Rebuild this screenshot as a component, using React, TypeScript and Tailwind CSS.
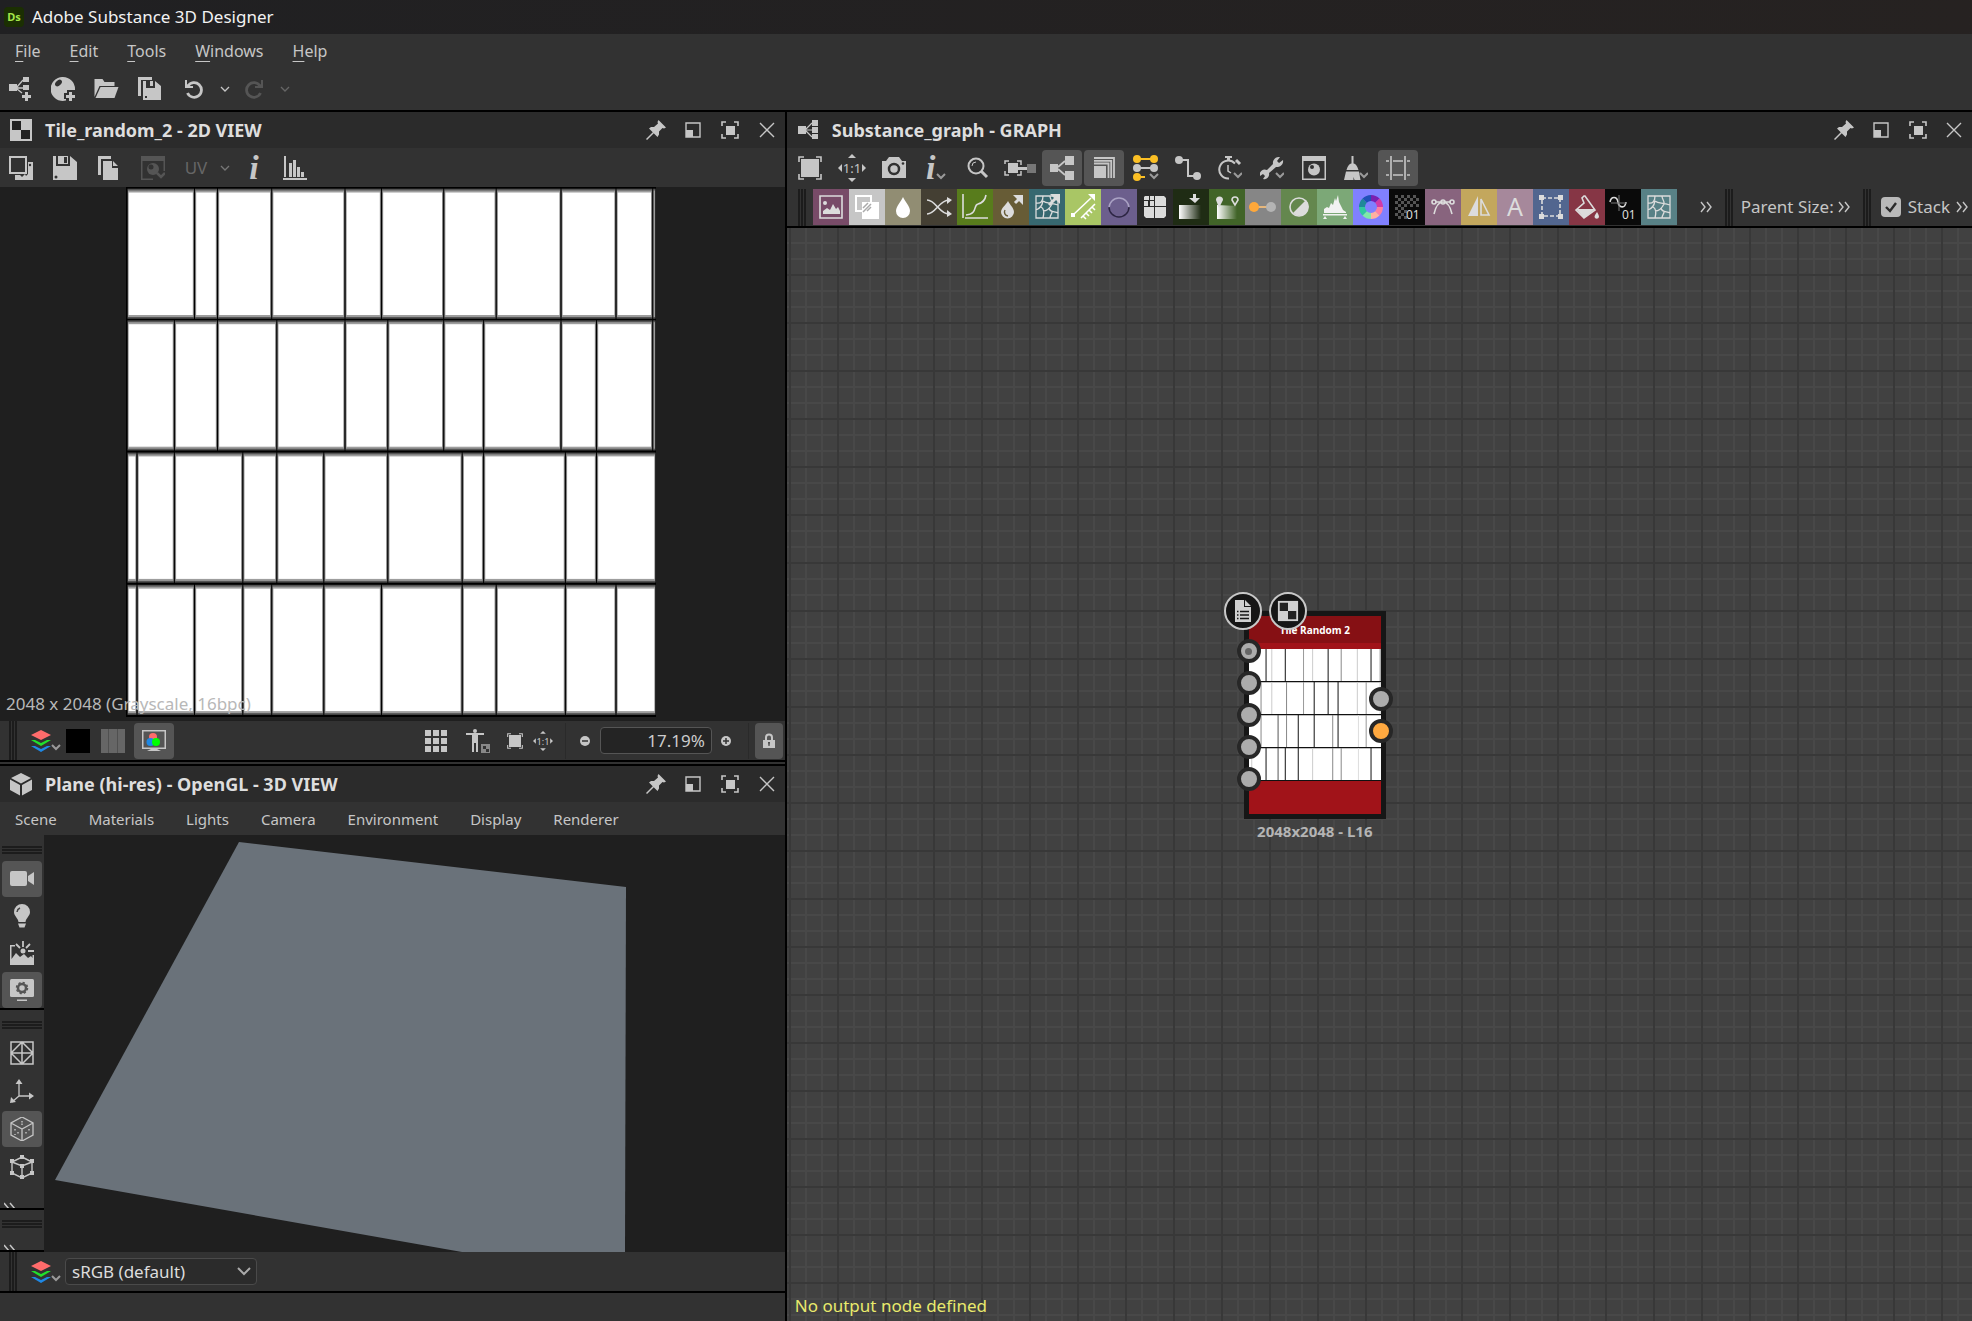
import type { ReactNode } from 'react'
import { clsx } from 'clsx'

type IconProps = {
  children: ReactNode
  box?: number
  className?: string
}

function Icon({ children, box = 24, className = 'size-6' }: IconProps) {
  return (
    <svg
      viewBox={`0 0 ${box} ${box}`}
      className={clsx('shrink-0', className)}
      fill="currentColor"
      aria-hidden="true"
    >
      {children}
    </svg>
  )
}

// ---------- shared icons ----------

const Chevron = ({ className = 'size-[10px]' }: { className?: string }) => (
  <Icon box={10} className={className}>
    <path d="M1 3l4 4 4-4" fill="none" stroke="currentColor" strokeWidth="1.3" />
  </Icon>
)

// small chevron drawn in the corner of an icon that opens a menu
const cornerChevron = (
  <path d="M16 17l4 4 4-4" fill="none" stroke="#9a9a9a" strokeWidth="2" />
)

const DoubleChevron = () => (
  <Icon box={12} className="size-3">
    <path d="M1 1l4 5-4 5M7 1l4 5-4 5" fill="none" stroke="currentColor" strokeWidth="1.4" />
  </Icon>
)

const GraphIcon = () => (
  <Icon>
    <path d="M2 8h8v8H2zM16 2h6v6h-6zM16 9h6v6h-6zM16 16h6v5h-6z" />
    <path d="M10 11l6-6M10 12h6M10 13l6 6" fill="none" stroke="currentColor" strokeWidth="1.2" />
  </Icon>
)

const CheckerIcon = ({ className }: { className?: string }) => (
  <Icon className={className}>
    <path d="M1 1h22v22H1z" />
    <path d="M3 3h9v9H3zM12 12h9v9h-9z" fill="#222" />
  </Icon>
)

const FrameIcon = ({ className }: { className?: string }) => (
  <Icon className={className}>
    <path d="M3 3h18v18H3z" />
    <path
      d="M1 6V1h5M18 1h5v5M23 18v5h-5M6 23H1v-5"
      fill="none"
      stroke="currentColor"
      strokeWidth="1.6"
    />
  </Icon>
)

const OneToOneIcon = ({ className }: { className?: string }) => (
  <Icon box={28} className={className}>
    <path d="M14 0l4 4h-8zM14 28l4-4h-8zM0 14l4-4v8zM28 14l-4-4v8z" />
    <text x="14" y="19" textAnchor="middle" fontSize="13" fontFamily="Noto Sans">
      1:1
    </text>
  </Icon>
)

const LayersIcon = () => (
  <Icon box={30} className="size-[30px]">
    <path d="M10 4l10 5-10 5L0 9z" fill="#ff6b6b" />
    <path d="M0 14h4l6 3 6-3h4l-10 6z" fill="#22e02c" />
    <path d="M0 20h4l6 3 6-3h4l-10 6z" fill="#1e88e5" />
    <path d="M21 19l4 4 4-4" fill="none" stroke="#9a9a9a" strokeWidth="2" />
  </Icon>
)

// ---------- panel chrome ----------

function PanelHeader({ icon, title }: { icon: ReactNode; title: string }) {
  return (
    <header className="flex h-9 shrink-0 items-center bg-[#2b2b2b] pl-[9px]">
      {icon}
      <h2 className="ml-3 flex-1 text-lg font-bold text-[#dedede]">{title}</h2>
      <button aria-label="Pin" className="flex h-9 w-[37px] items-center justify-center">
        <Icon box={20} className="size-5">
          <path d="M12.500 0L20 7.500l-2 1-1.500-.5-3.500 3.500v3L11.500 17 3 8.500l2-1.500h3L12 3.500 11.500 2z" />
          <path d="M8 12l-7.500 7.500" stroke="currentColor" strokeWidth="1.500" />
        </Icon>
      </button>
      <button aria-label="Float" className="flex h-9 w-[37px] items-center justify-center">
        <Icon box={16} className="size-4">
          <path d="M1 1h14v14H1z" fill="none" stroke="currentColor" strokeWidth="1.400" />
          <path d="M1 8h7v7H1z" />
        </Icon>
      </button>
      <button aria-label="Maximize" className="flex h-9 w-[37px] items-center justify-center">
        <Icon box={18} className="size-[18px]">
          <path d="M5 5h9v9H5z" />
          <path
            d="M1 5V1h4M13 1h4v4M17 13v4h-4M5 17H1v-4"
            fill="none"
            stroke="currentColor"
            strokeWidth="1.600"
          />
        </Icon>
      </button>
      <button aria-label="Close" className="flex size-9 items-center justify-center">
        <Icon box={16} className="size-4">
          <path d="M1 1l14 14M15 1L1 15" stroke="currentColor" strokeWidth="1.400" />
        </Icon>
      </button>
    </header>
  )
}

function Grip({ className }: { className?: string }) {
  return (
    <div
      className={clsx(
        'w-2 shrink-0 self-stretch border-x-2 border-[#1c1c1c] px-px',
        className
      )}
    >
      <div className="h-full bg-[#1c1c1c]" />
    </div>
  )
}

function GripRow() {
  return (
    <div className="mx-[2px] h-2 shrink-0 border-y-2 border-[#1c1c1c] py-px">
      <div className="h-full bg-[#1c1c1c]" />
    </div>
  )
}

type ToolProps = {
  label: string
  active?: boolean
  className?: string
  children: ReactNode
}

function Tool({ label, active, className, children }: ToolProps) {
  return (
    <button
      aria-label={label}
      aria-pressed={active}
      className={clsx(
        'flex h-9 shrink-0 items-center justify-center rounded-[4px]',
        active && 'bg-[#555]',
        className
      )}
    >
      {children}
    </button>
  )
}

// ---------- tile pattern ----------

const tileRows = [
  [68.5, 91.5, 145.7, 219, 255.5, 317.7, 370.2, 435, 490, 526.7],
  [48.4, 91.5, 150.8, 219, 261.8, 317.7, 357.6, 435, 470.5, 526.7],
  [11, 48.4, 116.8, 150.8, 197.8, 261.8, 336.2, 357.6, 439.4, 470.5],
  [11, 68.5, 116.8, 145.7, 197.8, 255.5, 336.2, 370.2, 439.4, 490],
]

const thumbShades = [
  '#111 #ccc #111 #999 #ccc #111 #888 #ccc #111 #888',
  '#888 #ccc #888 #999 #111 #111 #111 #ccc #999 #ccc',
  '#fff #888 #555 #888 #111 #111 #888 #111 #ddd #999',
  '#ccc #111 #555 #111 #111 #ccc #888 #888 #ddd #111',
].map((s) => s.split(' '))

function TilePattern() {
  return (
    <svg viewBox="0 0 530 530" className="h-[530px] w-[530px]" role="img" aria-label="Tile_random_2">
      <path d="M0 0h530v530H0z" />
      {tileRows.map((cuts, row) => {
        const edges = [1, ...cuts, 530]
        const y = row * 132.2 + (row === 0 ? 0.5 : 0)
        return edges.slice(1).map((right, i) => {
          const left = edges[i]
          const w = right - left
          return (
            <g key={`${row}-${i}`}>
              <rect x={left + 0.5} y={y + 1.2} width={w - 1} height="130" fill="#555" />
              <rect x={left + 1} y={y + 3} width={Math.max(w - 2, 0)} height="126.5" fill="#9d9d9d" />
              <rect x={left + 1.7} y={y + 5} width={Math.max(w - 3.4, 0)} height="122.5" fill="#fff" />
            </g>
          )
        })
      })}
    </svg>
  )
}

function TileThumb() {
  return (
    <svg viewBox="0 0 530 530" className="block w-full" aria-hidden="true">
      <path d="M0 0h530v530H0z" fill="#fff" />
      {tileRows.map((cuts, row) => (
        <g key={row}>
          {cuts.map((x, i) => (
            <path
              key={x}
              d={`M${x} ${row * 132.5}v132.5`}
              stroke={thumbShades[row][i]}
              strokeWidth="4"
            />
          ))}
          <path d={`M0 ${row * 132.5 + 131}h530`} stroke="#111" strokeWidth="5" />
        </g>
      ))}
    </svg>
  )
}

// ---------- top bars ----------

const menus = ['File', 'Edit', 'Tools', 'Windows', 'Help']

function TopBars() {
  return (
    <>
      <div className="flex h-[34px] items-center gap-2 bg-linear-to-r from-[#202022] to-[#262221] pl-1 text-[#f2f2f2]">
        <span className="flex size-5 items-center justify-center rounded-[4px] bg-[#1b2f02] text-[11px] font-bold text-[#a4e64a]">
          Ds
        </span>
        <h1>Adobe Substance 3D Designer</h1>
      </div>
      <nav className="flex h-[34px] items-center gap-[29px] pl-[15px] text-base">
        {menus.map((m) => (
          <button key={m}>
            <span className="underline underline-offset-4">{m[0]}</span>
            {m.slice(1)}
          </button>
        ))}
      </nav>
      <div className="flex h-[44px] items-center border-b-2 border-black">
        <Tool label="New graph" className="w-[42px]">
          <Icon>
            <path d="M0 7h8v7H0zM14 0h6v5h-6zM14 8h6v5h-6zM16 15h3v3h3v3h-3v3h-3v-3h-3v-3h3z" />
            <path d="M8 10l6-7M8 11h6M8 12l5 4" fill="none" stroke="currentColor" strokeWidth="1.300" />
          </Icon>
        </Tool>
        <Tool label="New package" className="w-[42px]">
          <Icon>
            <path d="M12 0a12 12 0 0112 12v1h-8v3h-3v6h2v1.500A12 12 0 1112 0z" />
            <ellipse cx="7.500" cy="6" rx="4" ry="2.600" fill="#323232" transform="rotate(-45 7.500 6)" />
            <path d="M18 15h3v3h3v3h-3v3h-3v-3h-3v-3h3z" />
          </Icon>
        </Tool>
        <Tool label="Open" className="w-[45px]">
          <Icon className="h-6 w-[25px]">
            <path d="M0 20V2h8l2 3h10v4H5z" />
            <path d="M6 10h18l-4 11H1z" />
          </Icon>
        </Tool>
        <Tool label="Save all" className="w-[42px]">
          <Icon>
            <path d="M0 0h14v3H3v16H0z" />
            <path d="M5 4h3v7h9V4l6 5v14H5zM12 4h3v5h-3z" />
            <path d="M7 19h2v2H7z" fill="#323232" />
          </Icon>
        </Tool>
        <Tool label="Undo" className="w-[46px]">
          <Icon box={20} className="size-5">
            <path d="M4 8a7.300 7.300 0 11-.5 7" fill="none" stroke="currentColor" strokeWidth="2.800" transform="translate(0 -1)" />
            <path d="M1 1v8h8V7H5L3 5V1z" />
          </Icon>
        </Tool>
        <Tool label="Undo history" className="w-4">
          <Chevron />
        </Tool>
        <Tool label="Redo" className="w-[42px] text-[#555]">
          <Icon box={20} className="size-5">
            <path d="M16 8a7.300 7.300 0 10.500 7" fill="none" stroke="currentColor" strokeWidth="2.800" transform="translate(0 -1)" />
            <path d="M19 1v8h-8V7h4l2-2V1z" />
          </Icon>
        </Tool>
        <Tool label="Redo history" className="w-5 text-[#666]">
          <Chevron />
        </Tool>
      </div>
    </>
  )
}

// ---------- 2D view ----------

function View2D() {
  return (
    <section>
      <PanelHeader icon={<CheckerIcon />} title="Tile_random_2 - 2D VIEW" />
      <div className="flex h-[39px] items-center">
        <Tool label="Copy to clipboard" className="w-[42px]">
          <Icon>
            <path d="M0 0h18v18H0zM2 2v14h14V2z" fillRule="evenodd" />
            <path d="M19 6h5v18H6v-5h5l2 2 3-3 1 2 2-2z" />
            <circle cx="21" cy="9" r="1.200" fill="#323232" />
          </Icon>
        </Tool>
        <Tool label="Save image" className="w-[46px]">
          <Icon>
            <path d="M0 0h3v10h14V0l7 6v18H0z" />
            <path d="M5 0h10v8H5zM11 1v6h3V1z" fillRule="evenodd" />
            <circle cx="3" cy="21" r="1.500" fill="#323232" />
          </Icon>
        </Tool>
        <Tool label="Duplicate" className="w-[40px]">
          <Icon>
            <path d="M2 0h13v3H5v16H2z" />
            <path d="M7 5h9v7h6v12H7zM17 5l5 5h-5z" />
          </Icon>
        </Tool>
        <Tool label="Background image" className="w-[50px] text-[#555]">
          <Icon>
            <path d="M0 0h24v15h-1.500V5h-21v17.500H12V24H0z" />
            <circle cx="12" cy="13" r="6" />
            <circle cx="10" cy="11" r="2.500" fill="#323232" />
            <path d="M16 17l4 4 4-4" fill="none" stroke="currentColor" strokeWidth="2.500" />
          </Icon>
        </Tool>
        <Tool label="UV" className="w-[36px] text-[#666]">
          UV
        </Tool>
        <Tool label="UV options" className="w-[22px] text-[#777]">
          <Chevron />
        </Tool>
        <Tool label="Information" className="w-[36px]">
          <span className="font-['Liberation_Serif',serif] text-[34px] leading-6 font-bold italic">i</span>
        </Tool>
        <Tool label="Histogram" className="w-[46px]">
          <Icon>
            <path d="M0 22h24v2H0zM1 0h2v21H1zM6 7h3v14H6zM10 4h3v17h-3zM14 11h3v10h-3zM18 16h3v5h-3z" />
          </Icon>
        </Tool>
      </div>
      <div className="relative flex h-[534px] items-start justify-center bg-[#1f1f1f] pr-[2px]">
        <TilePattern />
        <p className="absolute bottom-[5px] left-[6px] text-[#b8b8b8]">2048 x 2048 (Grayscale, 16bpc)</p>
      </div>
      <div className="flex h-[41px] items-center border-b-2 border-black pl-[9px]">
        <Grip />
        <button aria-label="Channels" className="ml-[14px]">
          <LayersIcon />
        </button>
        <button aria-label="Background color" className="ml-[5px] size-6 bg-black" />
        <button
          aria-label="Tiling preview"
          className="ml-[11px] flex size-6 justify-evenly bg-[#666]"
        >
          <span className="h-full w-px bg-[#505050]" />
          <span className="h-full w-px bg-[#505050]" />
        </button>
        <Tool label="Color management" active className="ml-[9px] w-10">
          <Icon>
            <path d="M0 1h24v19H0zM1.500 2.500v16h21v-16z" fillRule="evenodd" />
            <path d="M9 20h6l4 2H5z" />
            <circle cx="11" cy="8" r="4" fill="#ff6b6b" />
            <circle cx="8.500" cy="13" r="4" fill="#1e88e5" />
            <circle cx="14" cy="13" r="4" fill="#0f0" />
          </Icon>
        </Tool>
        <div className="ml-auto flex items-center">
          <Tool label="Tile grid" className="w-[42px]">
            <Icon box={22} className="size-[22px]">
              <path d="M0 0h6v6H0zM8 0h6v6H8zM16 0h6v6h-6zM0 8h6v6H0zM8 8h6v6H8zM16 8h6v6h-6zM0 16h6v6H0zM8 16h6v6H8zM16 16h6v6h-6z" />
            </Icon>
          </Tool>
          <Tool label="Physical size" className="w-[42px]">
            <Icon>
              <circle cx="9" cy="2" r="2" />
              <path d="M0 4h18v2h-6v17h-2v-9H8v9H6V6H0z" />
              <path d="M15 15h9v9h-9z" fill="#888" />
              <path d="M17 17h3v3h-3zM20 20h3v3h-3z" fill="#333" />
            </Icon>
          </Tool>
          <Tool label="Fit to view" className="w-[32px]">
            <FrameIcon className="size-4" />
          </Tool>
          <Tool label="Actual size" className="w-[24px]">
            <OneToOneIcon className="size-5" />
          </Tool>
          <div className="mr-1 ml-[10px] h-9 w-px bg-[#2a2a2a]" />
          <Tool label="Zoom out" className="w-[30px]">
            <Icon box={10} className="size-[10px]">
              <circle cx="5" cy="5" r="5" />
              <path d="M2 5h6" stroke="#333" strokeWidth="1.500" />
            </Icon>
          </Tool>
          <input
            aria-label="Zoom"
            defaultValue="17.19%"
            className="h-[27px] w-28 rounded-[4px] border border-[#555] bg-[#242424] px-[6px] text-right text-[#ccc]"
          />
          <Tool label="Zoom in" className="w-[28px]">
            <Icon box={10} className="size-[10px]">
              <circle cx="5" cy="5" r="5" />
              <path d="M2 5h6M5 2v6" stroke="#333" strokeWidth="1.500" />
            </Icon>
          </Tool>
          <div className="ml-2 h-9 w-px bg-[#2a2a2a]" />
          <Tool label="Lock zoom" active className="mr-[2px] ml-[6px] w-7">
            <Icon box={16} className="size-4">
              <path d="M2 7h12v8H2z" />
              <path d="M5 7V4.500a3 3 0 016 0V7" fill="none" stroke="currentColor" strokeWidth="2" />
              <path d="M7 9h2l-.5 4h-1z" fill="#444" />
            </Icon>
          </Tool>
        </div>
      </div>
    </section>
  )
}

// ---------- 3D view ----------

const viewMenus = ['Scene', 'Materials', 'Lights', 'Camera', 'Environment', 'Display', 'Renderer']

const MoreDown = () => (
  <Icon box={12} className="size-3">
    <path d="M0 1l5 6M6 1l5 6" fill="none" stroke="currentColor" strokeWidth="1.500" />
  </Icon>
)

function SideTools() {
  return (
    <div className="flex w-11 shrink-0 flex-col pt-[11px]">
      <GripRow />
      <div className="mt-[7px] flex flex-col gap-px border-b-2 border-black px-[2px]">
        <Tool label="Camera" active>
          <Icon className="h-6 w-[26px]">
            <rect x="0" y="4" width="17" height="15" rx="2" />
            <path d="M18 9l6-4v13l-6-4z" />
          </Icon>
        </Tool>
        <Tool label="Light">
          <Icon>
            <path d="M12 0a8 8 0 018 8c0 4-4 6-4.500 10h-7C8 14 4 12 4 8a8 8 0 018-8z" />
            <path d="M8 19.500h8l-1.500 4h-5z" />
            <path d="M7 8a5 5 0 013-4" fill="none" stroke="#444" strokeWidth="1.500" />
          </Icon>
        </Tool>
        <Tool label="Environment">
          <Icon>
            <path d="M0 24V4h5v1.500H1.500V18L6 12l4 4 4-3 4 4 3-2 1.500 2v-3H24v10z" />
            <circle cx="13" cy="10" r="2.500" />
            <path d="M13 0v6M6 3l4 4M20 3l-4 4M18 10h6" stroke="currentColor" strokeWidth="1.800" />
          </Icon>
        </Tool>
        <Tool label="Viewport settings" active>
          <Icon>
            <rect y="1" width="24" height="18" rx="1.500" />
            <circle cx="12" cy="10" r="4" fill="none" stroke="#555" strokeWidth="2.500" />
            <circle cx="12" cy="10" r="5.500" fill="none" stroke="#555" strokeWidth="1.500" strokeDasharray="2.200 2.120" />
            <path d="M7 21.500h10V23H7z" />
          </Icon>
        </Tool>
      </div>
      <div className="mt-[11px]">
        <GripRow />
      </div>
      <div className="mt-[6px] flex flex-1 flex-col gap-[2px] overflow-hidden border-b-2 border-black px-[2px]">
        <Tool label="Wireframe">
          <Icon>
            <path
              d="M1 1h22v22H1zM12 1v22M1 12h22M12 1l11 11-11 11L1 12z"
              fill="none"
              stroke="currentColor"
              strokeWidth="1.500"
            />
          </Icon>
        </Tool>
        <Tool label="Axes">
          <Icon>
            <path d="M9 3v14h12M9 17l-7 6" fill="none" stroke="currentColor" strokeWidth="1.300" />
            <path d="M9 0l3.500 5h-7zM24 17l-5-3.500v7zM0 24l1-6 5 5z" />
          </Icon>
        </Tool>
        <Tool label="Shaded cube" active>
          <Icon>
            <path
              d="M12 0l11 6v12l-11 6-11-6V6zM1 6l11 6 11-6M12 12v12"
              fill="none"
              stroke="currentColor"
              strokeWidth="1.300"
            />
            <path d="M12 4v5M5 12v2M8 15v2M5 17v1M19 12v2M16 15v2" stroke="currentColor" strokeWidth="1.400" strokeDasharray="1.500 1" />
          </Icon>
        </Tool>
        <Tool label="Vertex cube">
          <Icon>
            <path
              d="M12 2l10 5v11l-10 5-10-5V7zM2 7l10 4 10-4M12 11v11"
              fill="none"
              stroke="currentColor"
              strokeWidth="1.400"
            />
            <path d="M10 0h4v4h-4zM0 4h4v4H0zM20 4h4v4h-4zM10 9h4v4h-4zM0 16h4v4H0zM20 16h4v4h-4zM10 20h4v4h-4z" />
          </Icon>
        </Tool>
        <button aria-label="More display tools" className="mt-auto ml-[2px] h-[6px] w-3 overflow-hidden">
          <MoreDown />
        </button>
      </div>
      <div className="mt-[10px]">
        <GripRow />
      </div>
      <div className="flex h-6 items-end border-b-2 border-black pl-1">
        <button aria-label="More tools" className="h-[6px] w-3 overflow-hidden">
          <MoreDown />
        </button>
      </div>
    </div>
  )
}

function View3D() {
  return (
    <section className="flex min-h-0 flex-1 flex-col border-t-2 border-[#323232]">
      <div className="h-[2px] bg-black" />
      <PanelHeader
        icon={
          <Icon>
            <path d="M12 1l10 5-10 5.500L2 6zM1 7.500l10 5.500v10.500L1 18zM23 7.500L13 13v10.500L23 18z" />
          </Icon>
        }
        title="Plane (hi-res) - OpenGL - 3D VIEW"
      />
      <nav className="flex h-[33px] shrink-0 items-center gap-8 pl-[15px] text-[15px]">
        {viewMenus.map((m) => (
          <button key={m}>{m}</button>
        ))}
      </nav>
      <div className="flex min-h-[417px] flex-1">
        <SideTools />
        <div className="flex-1 overflow-hidden bg-[#1f1f1f]">
          <svg viewBox="0 0 742 417" className="h-[417px] w-[742px] max-w-none" role="img" aria-label="Plane mesh">
            <path d="M195 7l387 45-1 365H418L11 345z" fill="#6a727a" />
          </svg>
        </div>
      </div>
      <div className="flex h-[41px] shrink-0 items-center border-b-2 border-black pl-[9px]">
        <Grip />
        <button aria-label="Channels" className="ml-[14px]">
          <LayersIcon />
        </button>
        <div className="relative ml-1 w-48">
          <select
            aria-label="Color space"
            className="h-[27px] w-full appearance-none rounded-[4px] border border-[#4a4a4a] bg-[#2b2b2b] pl-[6px] text-[#ddd]"
          >
            <option>sRGB (default)</option>
            <option>Raw</option>
          </select>
          <Icon box={14} className="pointer-events-none absolute top-[6px] right-[6px] size-[14px]">
            <path d="M1 4l6 6 6-6" fill="none" stroke="#aaa" strokeWidth="2" />
          </Icon>
        </div>
      </div>
      <div className="h-7 shrink-0" />
    </section>
  )
}

// ---------- graph ----------

const graphTools: { label: string; active?: boolean; icon: ReactNode }[] = [
  { label: 'Fit', icon: <FrameIcon /> },
  { label: 'Actual size', icon: <OneToOneIcon className="size-7" /> },
  {
    label: 'Screenshot',
    icon: (
      <Icon>
        <path d="M0 5h4l3-4h10l3 4h4v17H0z" />
        <circle cx="12" cy="13" r="5" fill="none" stroke="#323232" strokeWidth="2.500" />
        <circle cx="21" cy="7.500" r="1.300" fill="#323232" />
      </Icon>
    ),
  },
  {
    label: 'Node info',
    icon: (
      <>
        <span className="font-['Liberation_Serif',serif] text-[34px] leading-6 font-bold italic">i</span>
        <Icon box={10} className="mt-4 size-[10px]">
          <path d="M1 3l4 4 4-4" fill="none" stroke="#9a9a9a" strokeWidth="2" />
        </Icon>
      </>
    ),
  },
  {
    label: 'Search',
    icon: (
      <Icon>
        <circle cx="10" cy="10" r="7.500" fill="none" stroke="currentColor" strokeWidth="2" />
        <path d="M6 10a4 4 0 014-4" fill="none" stroke="currentColor" />
        <path d="M15 15l6 6" stroke="currentColor" strokeWidth="3" />
      </Icon>
    ),
  },
  {
    label: 'Dock nodes',
    icon: (
      <Icon box={32} className="size-8">
        <path d="M4 11h10v10H4z" />
        <path d="M14 15h9v3h-9z" />
        <path d="M23 12h9v9h-9z" fill="#777" />
        <path d="M1 12V9h4M13 9h4v4M17 19v4h-4M5 23H1v-4" fill="none" stroke="currentColor" strokeWidth="1.500" />
      </Icon>
    ),
  },
  {
    label: 'Link mode',
    active: true,
    icon: (
      <Icon>
        <path d="M0 8h8v8H0zM15 0h9v9h-9zM15 15h9v9h-9z" />
        <path d="M8 11l7-6M8 13l7 6" stroke="currentColor" strokeWidth="1.800" />
      </Icon>
    ),
  },
  {
    label: 'Thumbnails',
    active: true,
    icon: (
      <Icon>
        <path d="M2 10h12v12H2z" />
        <path d="M2 7.500h14.500V22M2 2h20v20M2 4.800h17.200V22" fill="none" stroke="currentColor" strokeWidth="1.800" />
      </Icon>
    ),
  },
  {
    label: 'Link colors',
    icon: (
      <Icon box={26} className="size-[26px]">
        <g fill="#fbbf24">
          <circle cx="4" cy="4" r="4" />
          <circle cx="21" cy="4" r="4" />
          <path d="M4 3h17v2H4zM4 21h8v2H4z" />
          <circle cx="4" cy="22" r="4" />
        </g>
        <circle cx="4" cy="13" r="4" />
        <circle cx="21" cy="13" r="4" />
        <path d="M4 12h17v2H4z" />
        <path d="M17 19l4 4 4-4" fill="none" stroke="#9a9a9a" strokeWidth="2" />
      </Icon>
    ),
  },
  {
    label: 'Link style',
    icon: (
      <Icon box={26} className="size-[26px]">
        <path d="M4 5h9v16h9" fill="none" stroke="currentColor" strokeWidth="2" />
        <circle cx="4" cy="5" r="4" />
        <circle cx="22" cy="21" r="4" />
      </Icon>
    ),
  },
  {
    label: 'Timings',
    icon: (
      <Icon>
        <path d="M17 7.500A9 9 0 1011 22.500" fill="none" stroke="currentColor" strokeWidth="2" />
        <path d="M7 0h7v2H7zM9 2h3v2H9z" />
        <path d="M10 9v6l3 2" fill="none" stroke="currentColor" strokeWidth="1.500" />
        <path d="M18 4l4 4" stroke="currentColor" strokeWidth="3" />
        {cornerChevron}
      </Icon>
    ),
  },
  {
    label: 'Tools',
    icon: (
      <Icon>
        <path d="M23 4l-4 3-2-2 3-4a6 6 0 00-7 7l-6 6a5 5 0 00-7 6l3-2 2 2-2 3a5 5 0 006-6l7-6a6 6 0 007-7z" />
        {cornerChevron}
      </Icon>
    ),
  },
  {
    label: 'Preview',
    icon: (
      <Icon>
        <path d="M0 0h24v24H0zM1.500 5v17.500h21V5z" fillRule="evenodd" />
        <circle cx="12" cy="13.500" r="6" />
        <circle cx="10" cy="11" r="2" fill="#323232" />
      </Icon>
    ),
  },
  {
    label: 'Clean',
    icon: (
      <Icon>
        <path d="M7.500 0h2v8h-2zM8.500 7c4 1 5 4 6 7h-12c1-3 2-6 6-7zM2 15.500h13l1.500 8.500h-6l-1-3v3H0z" />
        {cornerChevron}
      </Icon>
    ),
  },
  {
    label: 'Snap to grid',
    active: true,
    icon: (
      <Icon>
        <path
          d="M5 0v24M19 0v24M0 5h3M7 5h10M21 5h3M0 19h3M7 19h10M21 19h3"
          stroke="currentColor"
          strokeWidth="1.600"
        />
      </Icon>
    ),
  },
]

const line = { fill: 'none', stroke: 'currentColor', strokeWidth: 1.6 }

const cells = (
  <g {...line} strokeWidth="1.300">
    <path d="M1 1h22v22H1zM1 8c5 1 7-2 7-7M8 6c4 3 7 1 15 4M15 1c0 4 3 5 2 8M1 15c3-1 6-4 7-9M6 12c4 2 3 7 2 11M8 16c5 0 7-3 9-7M14 13c1 5 6 3 9 5M15 23c0-3 2-4 2-6" />
  </g>
)

const atomicNodes: { label: string; tile: string; art: ReactNode }[] = [
  {
    label: 'Bitmap',
    tile: 'bg-[#784b68]',
    art: (
      <>
        <path d="M1 1h22v22H1z" {...line} />
        <circle cx="6" cy="8" r="2" />
        <path d="M4 19v-3l4-3 3 2 3-6 3 5 2-2 2 4v3z" />
      </>
    ),
  },
  {
    label: 'Blend',
    tile: 'bg-[#c6c6c6]',
    art: (
      <g fill="#fff">
        <path d="M0 0h17v17H0zM2 2v13h13V2z" fillRule="evenodd" />
        <path d="M7 7h17v17H7z" />
        <path d="M8 13l5-5M8 17l8-8M12 16l4-4" stroke="#aaa" strokeWidth="1.500" />
      </g>
    ),
  },
  {
    label: 'Blur',
    tile: 'bg-[#918d73]',
    art: <path d="M12 2c2 5 7 9 7 14a7 7 0 01-14 0c0-5 5-9 7-14z" fill="#fff" />,
  },
  {
    label: 'Channels shuffle',
    tile: 'bg-[#443f33]',
    art: (
      <>
        <path d="M0 5c9 0 12 14 22 14M0 19c9 0 12-14 22-14" {...line} />
        <path d="M20 2l5 3-5 4zM20 15l5 4-5 3z" />
      </>
    ),
  },
  {
    label: 'Curve',
    tile: 'bg-[#587c1c]',
    art: <path d="M0-1v24M2 23h23M3 20c12-1 7-10 12-11 4-1 7-3 8-9" {...line} />,
  },
  {
    label: 'Directional blur',
    tile: 'bg-[#675c36]',
    art: (
      <>
        <path d="M9 6c2 4 6 7 6 11a6.500 6.500 0 01-13 0c0-4 5-7 7-11z" />
        <path d="M6 15a4 4 0 003 6" fill="none" stroke="#675c36" strokeWidth="1.400" />
        <path d="M16 8l5-5" stroke="currentColor" strokeWidth="3" />
        <path d="M14 0h10v10z" />
      </>
    ),
  },
  {
    label: 'Directional warp',
    tile: 'bg-[#376870]',
    art: (
      <>
        {cells}
        <path d="M14 10l7-7" stroke="currentColor" strokeWidth="3" />
        <path d="M15-1h10V9z" />
      </>
    ),
  },
  {
    label: 'Distance',
    tile: 'bg-[#a9c665]',
    art: (
      <g fill="#fff" stroke="#fff">
        <path d="M2 20L20 3M10 23L24 9M12 21l3 3M15 18l3 3M18 15l3 3M21 12l3 3" strokeWidth="1.600" />
        <path d="M0 18h4v4H0zM17-1h7v7z" stroke="none" />
      </g>
    ),
  },
  {
    label: 'Emboss',
    tile: 'bg-[#6c5f8d]',
    art: (
      <>
        <path d="M2 13a10 10 0 0120 0" fill="none" stroke="#aaa2c4" strokeWidth="1.500" />
        <path d="M2 12a10 10 0 0020 0" fill="none" stroke="#2c2543" strokeWidth="1.500" />
      </>
    ),
  },
  {
    label: 'FX map',
    tile: 'bg-[#2b2b2b]',
    art: (
      <path d="M2 1h4v4H1V2zM7 1h4v4H7zM1 6h4v5H1zM7 6h4v5H7zM12 1h9l2 2v8H12zM1 12h10v11H3l-2-2zM12 12h11v9l-2 2h-9z" />
    ),
  },
  {
    label: 'Gradient',
    tile: 'bg-[#1f2c14]',
    art: (
      <>
        <path d="M0 10h22v14H0z" fill="url(#fade)" />
        <path d="M14-1h3v4h4l-5 5-6-5h4z" />
      </>
    ),
  },
  {
    label: 'Gradient map',
    tile: 'bg-[#416428]',
    art: (
      <>
        <path d="M2 10l20 1v13H2z" fill="url(#fade)" />
        <path d="M4 13L1 5a3.500 3.500 0 117 0z" />
        <path d="M20 10l-3-5a3 3 0 116 0z" {...line} />
      </>
    ),
  },
  {
    label: 'Grayscale conversion',
    tile: 'bg-[#868686]',
    art: (
      <>
        <path d="M4 11h16v2H4z" fill="#e6b77c" />
        <circle cx="3" cy="12" r="5" fill="#ffa83a" />
        <circle cx="20" cy="12" r="5" fill="#b4b4b4" />
      </>
    ),
  },
  {
    label: 'HSL',
    tile: 'bg-[#64874e]',
    art: (
      <>
        <circle cx="12" cy="12" r="9" {...line} />
        <path d="M19 5a9 9 0 01-13 13z" />
      </>
    ),
  },
  {
    label: 'Levels',
    tile: 'bg-[#7ca877]',
    art: (
      <g fill="#f2f2f2">
        <path d="M1 18v-4l3-2 2 1 2-5 2 2 2-7 1 3 2-6 1 7 2 4 2 4 3 2v1zM0 19h24v1.500H0zM0 24l2-3 2 3zM20 24l2-3 2 3z" />
      </g>
    ),
  },
  {
    label: 'Normal',
    tile: 'bg-[#8080ff]',
    art: (
      <g fill="none" strokeWidth="6" strokeDasharray="7.100 49.500">
        {['#7a1fb0', '#d03aa8', '#ff7fa0', '#ffb0a0', '#7fe8a8', '#30c8a0', '#20889a', '#2050b8'].map(
          (color, i) => (
            <circle key={color} cx="12" cy="12" r="9" stroke={color} transform={`rotate(${i * 45 - 90} 12 12)`} />
          )
        )}
      </g>
    ),
  },
  {
    label: 'Pixel processor',
    tile: 'bg-[#0a0a0a]',
    art: (
      <>
        <path d="M0 0h24v12H12v12H0z" fill="url(#checks)" />
        <text x="11" y="24" fontSize="12" fontFamily="Noto Sans">
          01
        </text>
      </>
    ),
  },
  {
    label: 'Spline',
    tile: 'bg-[#88647e]',
    art: (
      <g {...line}>
        <path d="M3 19c2-9 5-12 9-12s7 3 9 12M4 7h16" />
        <circle cx="3" cy="7" r="2" />
        <circle cx="12" cy="7" r="2" />
        <circle cx="21" cy="7" r="2" />
      </g>
    ),
  },
  {
    label: 'Mirror',
    tile: 'bg-[#c3a75d]',
    art: (
      <>
        <path d="M11 1v20H1z" />
        <path d="M14 4v16h8z" {...line} />
      </>
    ),
  },
  {
    label: 'Text',
    tile: 'bg-[#a6889b]',
    art: (
      <text x="12" y="21" textAnchor="middle" fontSize="25" fontFamily="Noto Sans">
        A
      </text>
    ),
  },
  {
    label: 'Transformation',
    tile: 'bg-[#52668f]',
    art: (
      <>
        <path d="M3 3h18v18H3z" {...line} strokeDasharray="4 2" />
        <path d="M0 0h5v5H0zM19 0h5v5h-5zM0 19h5v5H0zM19 19h5v5h-5z" />
      </>
    ),
  },
  {
    label: 'Uniform color',
    tile: 'bg-[#863645]',
    art: (
      <>
        <path d="M9 1l-2 2 2 5-8 7 8 8 11-8L10 1z" {...line} />
        <path d="M1 14h19l-11 9zM22 17c1 2 2 3 2 5a2.300 2.300 0 01-4.500 0c0-2 1.500-3 2.500-5z" />
      </>
    ),
  },
  {
    label: 'Value processor',
    tile: 'bg-[#0a0a0a]',
    art: (
      <>
        <path d="M-1 7C0 1 6 1 7 7s7 7 8 0" {...line} />
        <path d="M8 0v16M0 8h16" stroke="#777" strokeWidth="1" />
        <text x="11" y="24" fontSize="12" fontFamily="Noto Sans">
          01
        </text>
      </>
    ),
  },
  { label: 'Warp', tile: 'bg-[#588186]', art: cells },
]

function NodeBar() {
  return (
    <div className="flex h-[39px] shrink-0 items-start overflow-hidden border-b-2 border-black pl-[11px]">
      <Grip className="mr-[7px]" />
      {atomicNodes.map((n) => (
        <button
          key={n.label}
          aria-label={n.label}
          className={clsx('flex size-9 shrink-0 items-center justify-center text-[#dcdcdc]', n.tile)}
        >
          <Icon className="size-6 overflow-visible">{n.art}</Icon>
        </button>
      ))}
      <button aria-label="More nodes" className="ml-[23px] flex h-9 items-center">
        <DoubleChevron />
      </button>
      <Grip className="ml-auto" />
      <div className="flex h-9 items-center gap-1 pr-[13px] pl-2 whitespace-nowrap">
        <span>Parent Size:</span>
        <DoubleChevron />
      </div>
      <Grip />
      <label className="flex h-9 items-center gap-[7px] pl-[10px]">
        <span className="grid">
          <input
            type="checkbox"
            defaultChecked
            className="col-start-1 row-start-1 size-5 appearance-none rounded-[4px] bg-[#b9b9b9]"
          />
          <Icon box={20} className="pointer-events-none col-start-1 row-start-1 size-5">
            <path d="M5 10l4 4 6-8" fill="none" stroke="#2b2b2b" strokeWidth="2.400" />
          </Icon>
        </span>
        Stack
      </label>
      <button aria-label="More options" className="mr-1 ml-[6px] flex h-9 items-center">
        <DoubleChevron />
      </button>
    </div>
  )
}

const inputs = [35, 67, 99, 131, 163]
const outputs = [
  { y: 83, color: 'bg-[#acacac]' },
  { y: 115, color: 'bg-[#ffa940]' },
]

function Port({ color = 'bg-[#acacac]', primary }: { color?: string; primary?: boolean }) {
  return (
    <span
      className={clsx(
        'flex size-6 items-center justify-center rounded-full border-4 border-[#272727]',
        color
      )}
    >
      {primary && <span className="size-[7px] rounded-full bg-[#666]" />}
    </span>
  )
}

function GraphNode() {
  return (
    <div className="absolute top-[383px] left-[457px] w-[142px]">
      <div className="relative border-[5px] border-[#161616] bg-[#a11319]">
        <div className="mb-[6px] flex h-[27px] items-center justify-center bg-[#861014] font-['Open_Sans','Noto_Sans',sans-serif] text-[10px] font-bold text-white">
          Tile Random 2
        </div>
        <TileThumb />
        <div className="h-[33px]" />
        {inputs.map((y, i) => (
          <div key={y} className="absolute -left-3" style={{ top: y - 12 }}>
            <Port primary={i === 0} />
          </div>
        ))}
        {outputs.map((o) => (
          <div key={o.y} className="absolute -right-3" style={{ top: o.y - 12 }}>
            <Port color={o.color} />
          </div>
        ))}
      </div>
      <div className="absolute -top-[19px] -left-5 flex gap-[7px]">
        <span className="flex size-[38px] items-center justify-center rounded-full border-2 border-[#c8c8c8] bg-[#161616] text-[#d0d0d0]">
          <Icon box={22} className="size-[22px]">
            <path d="M3 0h9v7h7v15H3zM13 0l6 6h-6z" />
            <path d="M5 11.500h1.500M8 11.500h9M5 15h1.500M8 15h9M5 18.500h1.500M8 18.500h9" stroke="#161616" strokeWidth="1.500" />
          </Icon>
        </span>
        <span className="flex size-[38px] items-center justify-center rounded-full border-2 border-[#c8c8c8] bg-[#161616] text-[#d0d0d0]">
          <CheckerIcon className="size-[22px]" />
        </span>
      </div>
      <p className="mt-[2px] text-center text-[15px] leading-5 font-bold whitespace-nowrap text-[#b4b4b4]">
        2048x2048 - L16
      </p>
    </div>
  )
}

function Graph() {
  return (
    <section className="flex min-w-0 flex-1 flex-col">
      <PanelHeader icon={<GraphIcon />} title="Substance_graph - GRAPH" />
      <div className="flex h-[41px] shrink-0 items-start pt-[2px] pl-[2px]">
        {graphTools.map((t) => (
          <Tool key={t.label} label={t.label} active={t.active} className="mx-px w-10">
            {t.icon}
          </Tool>
        ))}
      </div>
      <NodeBar />
      <div className="relative flex-1 overflow-hidden bg-[#414141] bg-[linear-gradient(to_right,#383838_2px,transparent_2px),linear-gradient(to_bottom,#383838_2px,transparent_2px),linear-gradient(to_right,#484848_2px,transparent_2px),linear-gradient(to_bottom,#484848_2px,transparent_2px)] bg-[size:48px_48px,48px_48px,16px_16px,16px_16px] bg-[position:2px_-2px]">
        <GraphNode />
        <p className="absolute bottom-[3px] left-2 text-[#e9ea6c]">No output node defined</p>
      </div>
    </section>
  )
}

export default function App() {
  return (
    <div className="flex min-h-screen flex-col bg-[#323232] font-['Noto_Sans','Open_Sans',sans-serif] text-[17px] leading-6 text-[#c6c6c6]">
      {/* fills shared by the node icons */}
      <svg className="absolute size-0" aria-hidden="true">
        <defs>
          <linearGradient id="fade">
            <stop offset="0" stopColor="#fff" />
            <stop offset="1" stopColor="#fff" stopOpacity="0" />
          </linearGradient>
          <pattern id="checks" width="6" height="6" patternUnits="userSpaceOnUse">
            <path d="M0 0h3v3H0zM3 3h3v3H3z" fill="#555" />
          </pattern>
        </defs>
      </svg>
      <TopBars />
      <main className="flex flex-1">
        <div className="flex w-[39.9%] shrink-0 flex-col border-r-2 border-black">
          <View2D />
          <View3D />
        </div>
        <Graph />
      </main>
    </div>
  )
}
